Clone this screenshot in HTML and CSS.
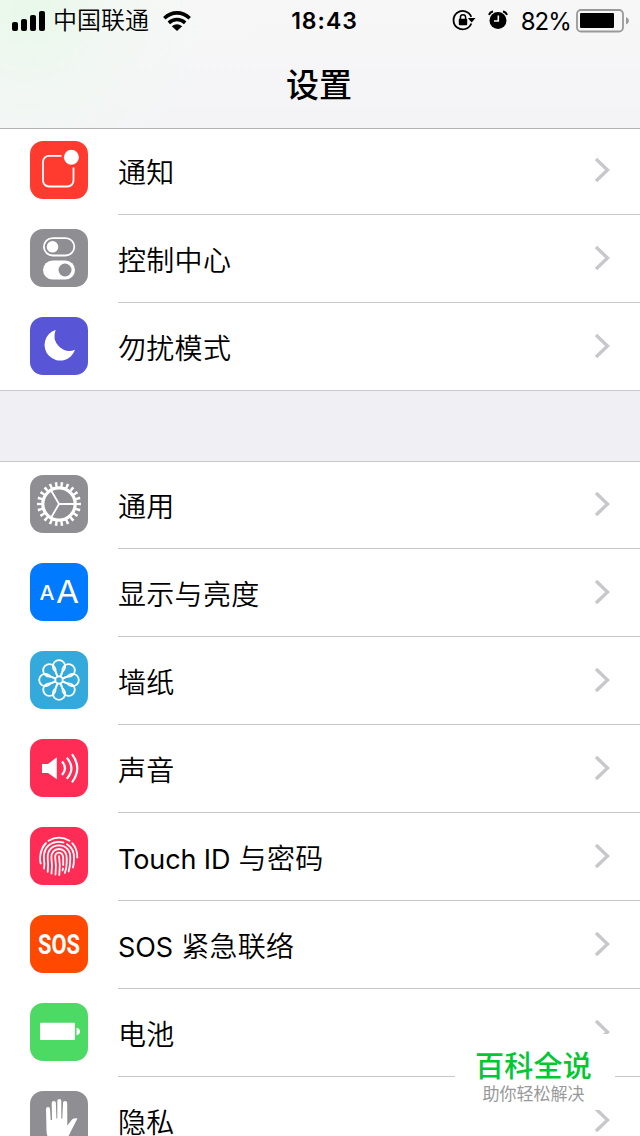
FILE: index.html
```html
<!doctype html>
<html lang="zh-CN">
<head>
    <meta charset="UTF-8">
    <title>设置</title>
    <link rel="stylesheet" href="styles.css">
</head>
<body>
<svg class="defs" width="0" height="0">
    <symbol id="arrow" viewBox="0 0 16 26">
        <path d="M2 2 13.500 13 2 24" fill="none" stroke="#c7c7cc" stroke-width="3.4"/>
    </symbol>
    <path id="petal" d="M27.600 25.600 25.500 20.500A6.200 6.200 0 1 1 32.500 20.500L30.400 25.600"/>
</svg>

<div class="header">
    <div class="status">
        <div class="left">
            <svg class="signal" width="34" height="20">
                <rect x="0" y="11" width="6" height="9" rx="2"/>
                <rect x="9" y="8" width="6" height="12" rx="2"/>
                <rect x="18" y="4" width="6" height="16" rx="2"/>
                <rect x="27" y="0" width="6" height="20" rx="2"/>
            </svg>
            <span class="carrier">中国联通</span>
            <svg class="wifi" width="28" height="20">
                <g fill="none" stroke="#000" stroke-width="3.6">
                    <path d="M1.3 7.2Q7 1.9 14 1.9T26.700 7.200"/>
                    <path d="M5.800 11.800Q9.500 8.500 14 8.500T22.200 11.800"/>
                </g>
                <path d="M14 20 8.800 15.300Q14 11.400 19.200 15.300Z"/>
            </svg>
        </div>
        <div class="time">18:43</div>
        <div class="right">
            <svg class="lock" width="24" height="22">
                <path d="M19.300 14.500A9.200 9.200 0 1 1 19.300 7.800" fill="none" stroke="#000" stroke-width="1.800"/>
                <path d="M15.800 9H23.500L19.700 13.500Z"/>
                <rect x="6.800" y="9.700" width="8.400" height="6.500" rx="1"/>
                <path d="M8.400 10V8.300a2.600 2.600 0 0 1 5.200 0V10" fill="none" stroke="#000" stroke-width="1.500"/>
            </svg>
            <svg class="alarm" width="20" height="20">
                <circle cx="10" cy="10.500" r="8.500"/>
                <path d="M10.300 5.500V11H6" fill="none" stroke="#f7f7f7" stroke-width="1.600"/>
                <path d="M1 5Q2 2 5 1.500M19 5Q18 2 15 1.500" fill="none" stroke="#000" stroke-width="1.800"/>
            </svg>
            <span class="percent">82%</span>
            <svg class="power" width="53" height="24">
                <rect x="1" y="1" width="46" height="21.500" rx="4" fill="none" stroke="#999" stroke-width="1.800"/>
                <rect x="4" y="4" width="34" height="15" rx="1"/>
                <path d="M50 8Q53 9.500 53 11.700T50 15.500Z" fill="#999"/>
            </svg>
        </div>
    </div>
    <h1>设置</h1>
</div>

<div class="group">
    <div class="row">
        <svg class="icon red" viewBox="0 0 58 58">
            <path class="line" d="M31.500 14.800H19a6 6 0 0 0-6 6V39.500a6 6 0 0 0 6 6H37.500a6 6 0 0 0 6-6V26.500"/>
            <circle cx="41.400" cy="16.300" r="7.500"/>
        </svg>
        <div class="cell"><span>通知</span><svg class="arrow"><use href="#arrow"/></svg></div>
    </div>
    <div class="row">
        <svg class="icon gray" viewBox="0 0 58 58">
            <rect class="line" x="13.900" y="9.100" width="30.400" height="17.400" rx="8.700"/>
            <circle cx="22.500" cy="17.800" r="5.800"/>
            <rect x="13" y="31.400" width="32" height="19.200" rx="9.600"/>
            <circle cx="35" cy="41" r="6.500" fill="#8e8e93"/>
        </svg>
        <div class="cell"><span>控制中心</span><svg class="arrow"><use href="#arrow"/></svg></div>
    </div>
    <div class="row last">
        <svg class="icon purple" viewBox="0 0 58 58">
            <path d="M25.700 13A15.600 15.600 0 1 0 45 32.700A15 15 0 0 1 25.700 13Z"/>
        </svg>
        <div class="cell"><span>勿扰模式</span><svg class="arrow"><use href="#arrow"/></svg></div>
    </div>
</div>

<div class="space"></div>

<div class="group">
    <div class="row">
        <svg class="icon gray" viewBox="0 0 58 58">
            <circle class="line ring" cx="29" cy="29" r="16.200"/>
            <circle class="teeth" cx="29" cy="29" r="19.500" pathLength="220"/>
            <path class="line" d="M29 29H45M29 29 21 15.200M29 29 21 42.800"/>
        </svg>
        <div class="cell"><span>通用</span><svg class="arrow"><use href="#arrow"/></svg></div>
    </div>
    <div class="row">
        <svg class="icon blue" viewBox="0 0 58 58">
            <text class="letter small" x="9.600" y="37.300" textLength="15" lengthAdjust="spacingAndGlyphs">A</text>
            <text class="letter" x="26" y="39.500" textLength="23" lengthAdjust="spacingAndGlyphs">A</text>
        </svg>
        <div class="cell"><span>显示与亮度</span><svg class="arrow"><use href="#arrow"/></svg></div>
    </div>
    <div class="row">
        <svg class="icon cyan" viewBox="0 0 58 58">
            <g class="line">
                <use href="#petal"/>
                <use href="#petal" transform="rotate(45 29 29)"/>
                <use href="#petal" transform="rotate(90 29 29)"/>
                <use href="#petal" transform="rotate(135 29 29)"/>
                <use href="#petal" transform="rotate(180 29 29)"/>
                <use href="#petal" transform="rotate(225 29 29)"/>
                <use href="#petal" transform="rotate(270 29 29)"/>
                <use href="#petal" transform="rotate(315 29 29)"/>
                <circle cx="29" cy="29" r="3.700"/>
            </g>
        </svg>
        <div class="cell"><span>墙纸</span><svg class="arrow"><use href="#arrow"/></svg></div>
    </div>
    <div class="row">
        <svg class="icon pink" viewBox="0 0 58 58">
            <path d="M12 25H18L26.800 18.300V40.300L18 34H12Z"/>
            <path class="line wave" d="M32 22.500Q38 29.200 32 36M36.800 18.800Q46 29.200 36.800 39.700M42 15.200Q52.500 29.200 42 43.300"/>
        </svg>
        <div class="cell"><span>声音</span><svg class="arrow"><use href="#arrow"/></svg></div>
    </div>
    <div class="row">
        <svg class="icon pink" viewBox="0 0 58 58">
            <g class="line finger">
                <path d="M18.500 13.800Q29 7.500 39.500 13.800"/>
                <path d="M10.700 36.500Q9.500 33 10.600 26.500Q12 20 16 16"/>
                <path d="M42.200 16.200Q47.500 22 47.300 30.500"/>
                <path d="M14 41.500Q14.800 37 13.900 31C13.500 20 21 14.800 29 14.800Q31.500 14.800 33.500 15.500"/>
                <path d="M37 17.200Q44.500 21.500 44 31.500Q44 37 43 40.500"/>
                <path d="M17.700 44.800Q18.600 38 17.700 31C17.300 23 22.500 18.400 29 18.400C36 18.400 40.500 23.500 40.300 31Q40.300 39 38.600 44.500"/>
                <path d="M21.500 46.700Q22.500 38 21.400 31C21 25.500 24.500 22 29 22C33.500 22 36.700 25.500 36.700 31V35.500Q36.500 42 34.800 46"/>
                <path d="M25.500 47.500Q26.500 38 25.200 30.500C25 27.500 26.500 25.600 29 25.600C32 25.600 33 28.500 33.200 31V38"/>
                <path d="M29 29.200Q30.500 38 29.300 48M33 41.500 32.500 43.500"/>
            </g>
        </svg>
        <div class="cell"><span><span class="latin">Touch ID</span> 与密码</span><svg class="arrow"><use href="#arrow"/></svg></div>
    </div>
    <div class="row">
        <svg class="icon orange" viewBox="0 0 58 58">
            <text class="sos" x="8" y="38.800" textLength="42" lengthAdjust="spacingAndGlyphs">SOS</text>
        </svg>
        <div class="cell"><span><span class="latin">SOS</span> 紧急联络</span><svg class="arrow"><use href="#arrow"/></svg></div>
    </div>
    <div class="row">
        <svg class="icon green" viewBox="0 0 58 58">
            <rect x="10" y="19.700" width="35" height="17.300" rx=".8"/>
            <path d="M46.500 24.700Q50 25.500 50 28.500T46.500 32.300Z"/>
        </svg>
        <div class="cell"><span>电池</span><svg class="arrow"><use href="#arrow"/></svg></div>
    </div>
    <div class="row">
        <svg class="icon gray" viewBox="0 0 58 58">
            <path d="M16 18a2 2 0 0 1 4 0L20.700 29H22L21.700 12a2.100 2.100 0 0 1 4.200 0L26.400 27.500H27.300V10a2 2 0 0 1 4 0V27.500H32.300L33 12a2.100 2.100 0 0 1 4.200 0L37.300 34.500 42 28.500Q44.500 26.500 47.500 27.500L41 40Q37 50 30 51.500Q17 52 16.500 40Z"/>
        </svg>
        <div class="cell"><span>隐私</span><svg class="arrow"><use href="#arrow"/></svg></div>
    </div>
</div>

<div class="mark">
    <div class="name">百科全说</div>
    <div class="slogan">助你轻松解决</div>
</div>
</body>
</html>
```
FILE: styles.css
```css
* {
    padding: 0;
    margin: 0;
    box-sizing: border-box;
}

body {
    position: relative;
    width: 640px;
    height: 1136px;
    overflow: hidden;
    background: #fff;
    color: #000;
    font-family: Inter, "Noto Sans CJK SC", sans-serif;
}

.defs {
    position: absolute;
}

.header {
    height: 129px;
    margin-bottom: -2px;
    border-bottom: 1px solid #b2b2b4;
    background: radial-gradient(circle at 30px 10px, #e8f8e9 0, rgba(240, 248, 241, .7) 80px, rgba(247, 247, 247, 0) 180px), linear-gradient(#f7f7f7, #f4f4f7);
}

.status {
    display: grid;
    grid-template-columns: 1fr auto 1fr;
    align-items: center;
    height: 41px;
    padding: 0 11px 0 12px;
}

.left,
.right {
    display: flex;
    align-items: center;
}

.right {
    justify-content: flex-end;
}

.signal,
.wifi {
    margin-bottom: 1px;
}

.carrier {
    margin: 0 14px 0 7px;
    font-size: 24px;
    font-weight: 350;
    line-height: 42px;
}

.time {
    padding-left: 8px;
    font-size: 23px;
    font-weight: 600;
    letter-spacing: 1px;
}

.alarm {
    margin: 0 13px 2px 12px;
}

.lock {
    margin-bottom: 2px;
}

.percent {
    margin-right: 5px;
    font-size: 24px;
    letter-spacing: -.9px;
}

h1 {
    font-size: 33px;
    font-weight: 500;
    line-height: 88px;
    text-align: center;
    text-indent: -2px;
}

.row {
    display: flex;
    height: 88px;
    padding-left: 30px;
}

.icon {
    width: 58px;
    height: 58px;
    margin: 14px 30px 0 0;
    border-radius: 13px;
    fill: #fff;
}

.cell {
    display: flex;
    flex: 1;
    align-items: center;
    justify-content: space-between;
    padding-right: 30px;
    border-bottom: 1px solid #c8c7cc;
    font-size: 28px;
    font-weight: 350;
    letter-spacing: .3px;
}

.latin {
    font-size: 27px;
    font-weight: 400;
    letter-spacing: -.1px;
}

.last {
    border-bottom: 1px solid #c8c7cc;
}

.last .cell {
    border-bottom: none;
}

.arrow {
    width: 16px;
    height: 26px;
    margin-bottom: 1px;
}

.space {
    height: 71px;
    margin-bottom: -1px;
    border-bottom: 1px solid #c8c7cc;
    background: #efeff4;
}

.red { background: #ff3b30; }
.gray { background: #8e8e93; }
.purple { background: #5856d6; }
.blue { background: #007aff; }
.cyan { background: #34aadc; }
.pink { background: #ff2d55; }
.orange { background: #ff4800; }
.green { background: #4cd964; }

.line {
    fill: none;
    stroke: #fff;
    stroke-width: 1.8px;
}

.wave {
    stroke-width: 2.2px;
}

.ring {
    stroke-width: 3.2px;
}

.teeth {
    fill: none;
    stroke: #fff;
    stroke-width: 5px;
    stroke-dasharray: 4.4 5.6;
    stroke-dashoffset: 2.2px;
}

.finger {
    stroke-linecap: round;
}

.letter {
    font-family: Inter, sans-serif;
    font-size: 30.5px;
}

.small {
    font-size: 20px;
    font-weight: 500;
}

.sos {
    font-family: Roboto, sans-serif;
    font-size: 27px;
    font-weight: 700;
}

/* watermark over the list */
.mark {
    position: absolute;
    left: 455px;
    top: 1034px;
    width: 160px;
    height: 76px;
    padding: 16px 3px 0 0;
    background: #fff;
    text-align: center;
}

.name {
    color: #00c832;
    font-size: 29px;
    font-weight: 500;
    line-height: 34px;
    letter-spacing: .3px;
}

.slogan {
    color: #999;
    font-size: 17px;
    font-weight: 400;
    line-height: 20px;
}
```
